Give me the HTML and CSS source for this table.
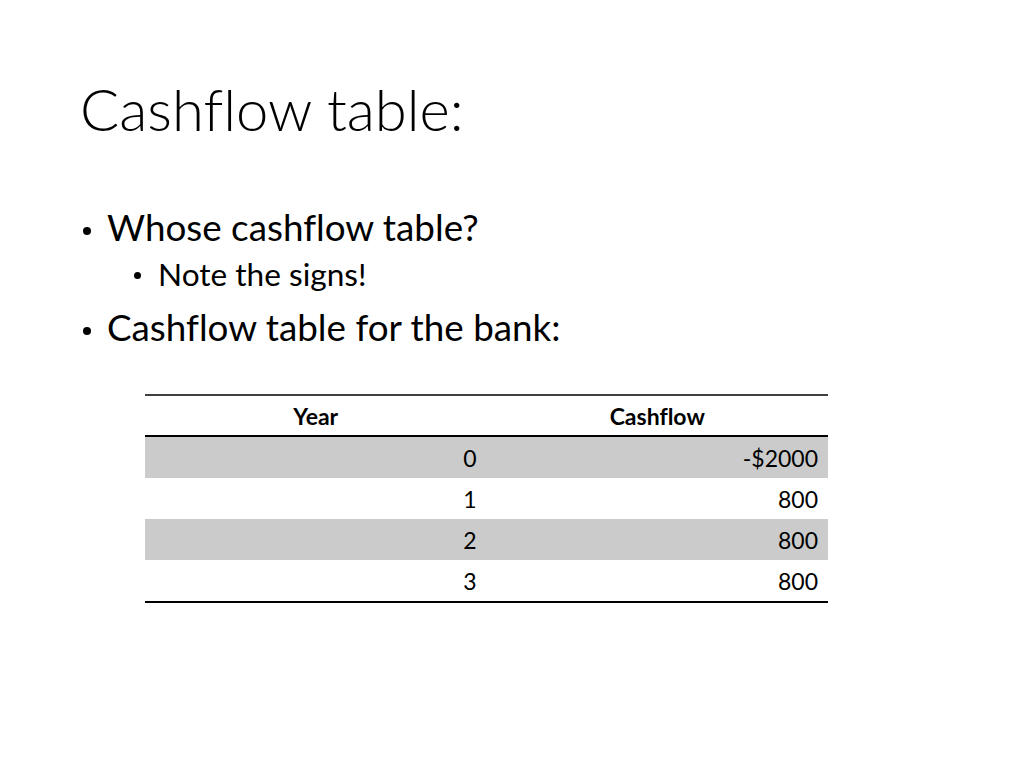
FILE: index.html
```html
<!DOCTYPE html>
<html>
<head>
<meta charset="utf-8">
<link rel="stylesheet" href="styles.css">
</head>
<body>
<div class="slide">
  <h1 class="title">Cashflow table:</h1>
  <ul class="bullets">
    <li class="l1">Whose cashflow table?
      <ul class="sub">
        <li class="l2">Note the signs!</li>
      </ul>
    </li>
    <li class="l1">Cashflow table for the bank:</li>
  </ul>
  <table class="cf">
    <thead>
      <tr><th>Year</th><th>Cashflow</th></tr>
    </thead>
    <tbody>
      <tr class="shade"><td>0</td><td>-$2000</td></tr>
      <tr><td>1</td><td>800</td></tr>
      <tr class="shade"><td>2</td><td>800</td></tr>
      <tr><td>3</td><td>800</td></tr>
    </tbody>
  </table>
</div>
</body>
</html>
```
FILE: styles.css
```css
html, body {
  margin: 0;
  padding: 0;
  background: #ffffff;
}
.slide {
  width: 1024px;
  height: 768px;
  font-family: "Lato", "Open Sans", sans-serif;
  font-variant-ligatures: none;
  color: #000;
  padding-top: 74px;
  box-sizing: border-box;
}
.title {
  margin: 0 0 0 80px;
  font-weight: 300;
  font-size: 58px;
  line-height: 70px;
}
.bullets {
  list-style: none;
  margin: 58px 0 0 0;
  padding: 0 0 0 84px;
}
.l1 {
  font-size: 36.8px;
  line-height: 50px;
  position: relative;
  padding-left: 23px;
}
.l1 + .l1 {
  margin-top: 6px;
}
.l1::before {
  content: "";
  position: absolute;
  left: -1px;
  top: 25px;
  width: 8px;
  height: 8px;
  border-radius: 50%;
  background: #000;
}
.sub {
  list-style: none;
  margin: 0;
  padding: 0 0 0 29px;
}
.l2 {
  font-size: 31.6px;
  line-height: 44px;
  position: relative;
  padding-left: 22px;
}
.l2::before {
  content: "";
  position: absolute;
  left: -2px;
  top: 20px;
  width: 7px;
  height: 7px;
  border-radius: 50%;
  background: #000;
}
.cf {
  margin: 42px 0 0 145px;
  width: 683px;
  border-collapse: collapse;
  font-size: 23px;
  table-layout: fixed;
}
.cf th {
  font-weight: 700;
  text-align: center;
  height: 39px;
  border-top: 2px solid #404040;
  border-bottom: 2px solid #000;
  padding: 0;
  width: 50%;
}
.cf td {
  text-align: right;
  height: 41px;
  padding: 0 10px;
}
.cf tr.shade td {
  background: #cbcbcb;
}
.cf tbody tr:last-child td {
  border-bottom: 2px solid #000;
}
```
